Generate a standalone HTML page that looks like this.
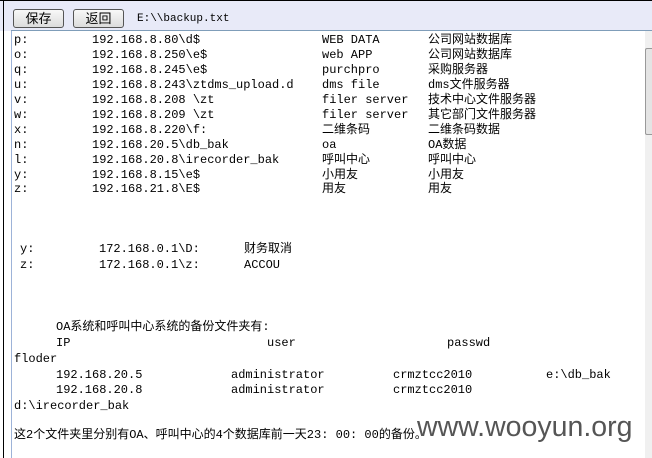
<!DOCTYPE html>
<html><head><meta charset="utf-8"><style>
*{margin:0;padding:0;box-sizing:border-box}
body{width:652px;height:458px;overflow:hidden;background:#fff;position:relative;font-family:"Liberation Mono","Noto Sans CJK SC",monospace;font-size:12px;color:#000}
.hdr{position:absolute;left:0;top:0;width:652px;height:31px;background:#e8eaf8;border-top:1px solid #000}
.lb{position:absolute;left:3px;top:0;width:1px;height:458px;background:#000}
.lb2{position:absolute;left:11px;top:30px;width:1px;height:428px;background:#9db3d8}
.tl{position:absolute;left:11px;top:30px;width:641px;height:1px;background:#7f9db9}
.btn{position:absolute;top:9px;height:19px;width:51px;border:1px solid #555;border-radius:3px;background:linear-gradient(#f8f8f8,#dcdcdc);font-family:"Liberation Sans","Noto Sans CJK SC",sans-serif;font-size:13px;text-align:center;line-height:17px}
.t{position:absolute;white-space:pre;line-height:15px;height:15px}
.sb{position:absolute;left:645px;top:31px;width:7px;height:427px;background:#f0f0f0}
.th{position:absolute;left:645px;top:48px;width:7px;height:87px;background:#e4e4e4;border:1px solid #999;border-right:none;border-radius:2px 0 0 2px}
.wm{position:absolute;left:417px;top:411px;font-family:"Liberation Sans",sans-serif;font-size:28.5px;color:#555;white-space:nowrap}
</style></head><body>
<div class="hdr"></div>
<div class="lb"></div><div class="lb2"></div><div class="tl"></div>
<div class="btn" style="left:13px">保存</div>
<div class="btn" style="left:73px">返回</div>
<div class="t" style="left:137px;top:12px;font-size:11px">E:\\backup.txt</div>
<div class="sb"></div><div class="th"></div>

<div class="t" style="left:14px;top:33px">p:</div><div class="t" style="left:92px;top:33px">192.168.8.80\d$</div><div class="t" style="left:322px;top:33px">WEB DATA</div><div class="t" style="left:428px;top:33px">公司网站数据库</div>
<div class="t" style="left:14px;top:48px">o:</div><div class="t" style="left:92px;top:48px">192.168.8.250\e$</div><div class="t" style="left:322px;top:48px">web APP</div><div class="t" style="left:428px;top:48px">公司网站数据库</div>
<div class="t" style="left:14px;top:63px">q:</div><div class="t" style="left:92px;top:63px">192.168.8.245\e$</div><div class="t" style="left:322px;top:63px">purchpro</div><div class="t" style="left:428px;top:63px">采购服务器</div>
<div class="t" style="left:14px;top:78px">u:</div><div class="t" style="left:92px;top:78px">192.168.8.243\ztdms_upload.d</div><div class="t" style="left:322px;top:78px">dms file</div><div class="t" style="left:428px;top:78px">dms文件服务器</div>
<div class="t" style="left:14px;top:93px">v:</div><div class="t" style="left:92px;top:93px">192.168.8.208 \zt</div><div class="t" style="left:322px;top:93px">filer server</div><div class="t" style="left:428px;top:93px">技术中心文件服务器</div>
<div class="t" style="left:14px;top:108px">w:</div><div class="t" style="left:92px;top:108px">192.168.8.209 \zt</div><div class="t" style="left:322px;top:108px">filer server</div><div class="t" style="left:428px;top:108px">其它部门文件服务器</div>
<div class="t" style="left:14px;top:123px">x:</div><div class="t" style="left:92px;top:123px">192.168.8.220\f:</div><div class="t" style="left:322px;top:123px">二维条码</div><div class="t" style="left:428px;top:123px">二维条码数据</div>
<div class="t" style="left:14px;top:138px">n:</div><div class="t" style="left:92px;top:138px">192.168.20.5\db_bak</div><div class="t" style="left:322px;top:138px">oa</div><div class="t" style="left:428px;top:138px">OA数据</div>
<div class="t" style="left:14px;top:153px">l:</div><div class="t" style="left:92px;top:153px">192.168.20.8\irecorder_bak</div><div class="t" style="left:322px;top:153px">呼叫中心</div><div class="t" style="left:428px;top:153px">呼叫中心</div>
<div class="t" style="left:14px;top:168px">y:</div><div class="t" style="left:92px;top:168px">192.168.8.15\e$</div><div class="t" style="left:322px;top:168px">小用友</div><div class="t" style="left:428px;top:168px">小用友</div>
<div class="t" style="left:14px;top:182px">z:</div><div class="t" style="left:92px;top:182px">192.168.21.8\E$</div><div class="t" style="left:322px;top:182px">用友</div><div class="t" style="left:428px;top:182px">用友</div>

<div class="t" style="left:20px;top:242px">y:</div><div class="t" style="left:99px;top:242px">172.168.0.1\D:</div><div class="t" style="left:244px;top:242px">财务取消</div>
<div class="t" style="left:20px;top:258px">z:</div><div class="t" style="left:99px;top:258px">172.168.0.1\z:</div><div class="t" style="left:244px;top:258px">ACCOU</div>

<div class="t" style="left:56px;top:320px">OA系统和呼叫中心系统的备份文件夹有:</div>
<div class="t" style="left:56px;top:336px">IP</div><div class="t" style="left:267px;top:336px">user</div><div class="t" style="left:447px;top:336px">passwd</div>
<div class="t" style="left:14px;top:352px">floder</div>
<div class="t" style="left:56px;top:368px">192.168.20.5</div><div class="t" style="left:231px;top:368px">administrator</div><div class="t" style="left:393px;top:368px">crmztcc2010</div><div class="t" style="left:546px;top:368px">e:\db_bak</div>
<div class="t" style="left:56px;top:383px">192.168.20.8</div><div class="t" style="left:231px;top:383px">administrator</div><div class="t" style="left:393px;top:383px">crmztcc2010</div>
<div class="t" style="left:14px;top:399px">d:\irecorder_bak</div>
<div class="t" style="left:14px;top:428px">这2个文件夹里分别有OA、呼叫中心的4个数据库前一天23: 00: 00的备份。</div>
<div class="wm">www.wooyun.org</div>
</body></html>
